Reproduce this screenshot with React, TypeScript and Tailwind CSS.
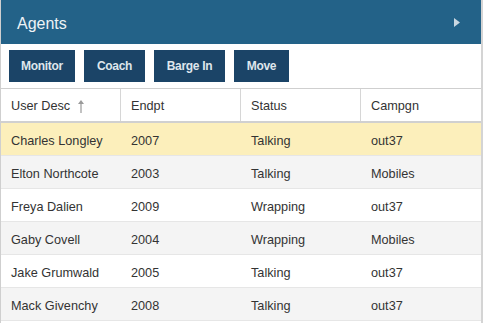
import React from "react";

const rows = [
  ["Charles Longley", "2007", "Talking", "out37"],
  ["Elton Northcote", "2003", "Talking", "Mobiles"],
  ["Freya Dalien", "2009", "Wrapping", "out37"],
  ["Gaby Covell", "2004", "Wrapping", "Mobiles"],
  ["Jake Grumwald", "2005", "Talking", "out37"],
  ["Mack Givenchy", "2008", "Talking", "out37"],
];

export default function App() {
  return (
    <div
      className="w-[484px] h-[323px] bg-white overflow-hidden"
      style={{ fontFamily: '"Liberation Sans", Arial, sans-serif' }}
    >
      <div className="w-[483px] h-[323px] border-l border-l-[#cfcfcf] border-r-2 border-r-[#d4d4d4] flex flex-col">
        <div className="h-[44px] shrink-0 bg-[#236288] flex items-center justify-between pl-[16px] pr-[21px] pt-[3px]">
          <span className="text-[16px] text-[#eef3f6]">Agents</span>
          <svg width="6" height="9" viewBox="0 0 6 9" className="-mt-[3px]">
            <path d="M0 0 L6 4.5 L0 9 Z" fill="#c9d7e1" />
          </svg>
        </div>
        <div className="h-[45px] shrink-0 flex items-center gap-[9px] pl-[8px] border-b border-b-[#cfcfcf]">
          {[
            ["Monitor", "w-[66px]"],
            ["Coach", "w-[61px]"],
            ["Barge In", "w-[71px]"],
            ["Move", "w-[55px]"],
          ].map(([t, w]) => (
            <div
              key={t}
              className={`${w} h-[32px] bg-[#1b4467] text-[#dfe6ec] text-[12px] tracking-[-0.3px] font-bold flex items-center justify-center`}
            >
              {t}
            </div>
          ))}
        </div>
        <div className="grid shrink-0 grid-cols-[120px_120px_120px_1fr] h-[34px] border-b-2 border-b-[#d0d0d0] text-[12.7px] text-[#333]">
          <div className="flex items-center pl-[10px] pt-[4px] border-r border-r-[#d6d6d6]">
            User Desc
            <svg width="6" height="13" viewBox="0 0 6 13" className="ml-[8px] -mt-[1px]">
              <path d="M3 0 L6 4 L3.6 4 L3.6 13 L2.4 13 L2.4 4 L0 4 Z" fill="#9a9a9a" />
            </svg>
          </div>
          <div className="flex items-center pl-[10px] pt-[4px] border-r border-r-[#d6d6d6]">Endpt</div>
          <div className="flex items-center pl-[10px] pt-[4px] border-r border-r-[#d6d6d6]">Status</div>
          <div className="flex items-center pl-[10px] pt-[4px]">Campgn</div>
        </div>
        {rows.map((r, i) => (
          <div
            key={r[0]}
            className={`grid shrink-0 grid-cols-[120px_120px_120px_1fr] h-[33px] border-b border-b-[#e6e6e6] text-[12.7px] text-[#333] ${
              i === 0 ? "bg-[#fcefbb]" : i % 2 === 1 ? "bg-[#f4f4f4]" : "bg-white"
            }`}
          >
            {r.map((c, j) => (
              <div key={j} className="flex items-center pl-[10px] pt-[5px]">
                {c}
              </div>
            ))}
          </div>
        ))}
      </div>
    </div>
  );
}
